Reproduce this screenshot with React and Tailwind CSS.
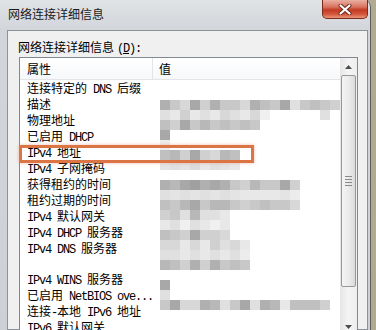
import React from 'react';

const rows = [
  '连接特定的 DNS 后缀',
  '描述',
  '物理地址',
  '已启用 DHCP',
  'IPv4 地址',
  'IPv4 子网掩码',
  '获得租约的时间',
  '租约过期的时间',
  'IPv4 默认网关',
  'IPv4 DHCP 服务器',
  'IPv4 DNS 服务器',
  '',
  'IPv4 WINS 服务器',
  '已启用 NetBIOS ove...',
  '连接-本地 IPv6 地址',
  'IPv6 默认网关',
];

// pixelated (blurred) values: [top y, start cell, grays]
const mosaic = [
  [100, 0, 'b0 c8 d8 a8 d0 b0 c8 c8 d8 b0 c0 c8 a8 e0 c8 c0 c8 d0'],
  [110, 0, 'e0 e8 d0 e8 e0 e8 d8 e0 e8 d8 f0'],
  [110, 16, 'e0'],
  [120, 0, 'c0 d0 a8 c8 b8 c8 c0 c8 c0 c8'],
  [130, 0, 'a8'],
  [140, 0, 'ec'],
  [150, 0, 'c0 b8 d0 a8 d0 d8 b8 c0'],
  [160, 0, 'e4 e0 e4 dc e8 e0 e4 e8'],
  [180, 0, 'b0 b8 a8 a0 b0 a8 b0 c8 d0 b8 c8 c8 a8 d0'],
  [190, 0, 'e0 e4 e0 e4 e0 e4 e0 e4 e8 e8 e8 e8 e4 ec'],
  [200, 0, 'c0 c8 b8 a8 c8 b8 b8 c8 d0 c8 c0 c8 c8 d8'],
  [210, 0, 'd0 c8 e0 b8 e0 e0 e8'],
  [220, 0, 'e8 e0 f0 e0 e8 f0 e8'],
  [230, 0, 'c0 c8 d0 a8 d0 d0 d8'],
  [240, 0, 'd8 d8 e8 d8 e8 d0 e0 d8 e8'],
  [250, 0, 'e0 e0 e8 e0 e8 e0 e8 e0 ec'],
  [260, 0, 'b8 c0 d0 b0 d0 b0 c8 c0 c8'],
  [280, 0, 'a8'],
  [290, 0, 'e0'],
  [300, 0, 'c8 a8 d8 d8 b0 b8 e0 c8 a8 e0 b0 b8 e8 c0 c0 c0 d0'],
];

function Label({ text }) {
  const parts = text.split(/([\x20-\x7e]+)/).filter(Boolean);
  return parts.map((p, i) =>
    /[\x20-\x7e]/.test(p[0]) ? (
      <span key={i} className="whitespace-pre font-['Liberation_Mono',monospace] tracking-[-1.2px]">
        {p}
      </span>
    ) : (
      <span key={i}>{p}</span>
    )
  );
}

function Mosaic() {
  return (
    <svg className="absolute left-[140px] top-[42px]" width="180" height="220">
      {mosaic.map(([y, start, grays]) =>
        grays.split(' ').map((g, i) => (
          <rect key={y + '-' + start + '-' + i} x={(start + i) * 10} y={y - 100} width="10" height="10" fill={'#' + g + g + g} />
        ))
      )}
    </svg>
  );
}

function Arrow({ up }) {
  return (
    <svg width="7" height="4">
      <polygon points={up ? '3.5,0 7,4 0,4' : '0,0 7,0 3.5,4'} fill="#4d4d4d" />
    </svg>
  );
}

export default function App() {
  return (
    <div className="w-[376px] h-[330px] overflow-hidden bg-[#b0aa92] flex font-['Noto_Sans_CJK_SC',sans-serif] text-[12px] text-black relative">
      <div className="w-[371px] h-full rounded-tr-[7px] border-r border-[#5e5e5e] bg-[linear-gradient(to_bottom,#e1e3e6,#d2d5d9_30px,#cdd0d4)] flex flex-col">
        {/* title bar */}
        <div className="h-[30px] flex justify-between">
          <div className="pl-[8px] pt-[6px] leading-[16px] text-[#1a1a1a]">网络连接详细信息</div>
          <div className="w-[46px] h-[19px] mr-[2px] rounded-b-[5px] border border-t-0 border-[#7a2c20] bg-[linear-gradient(to_bottom,#eab0a3_0%,#d8705c_40%,#c23a22_55%,#d45a40_80%,#e99578_100%)] flex items-center justify-center">
            <svg width="14" height="11">
              <path d="M2.5 1.5 L11.5 9.5 M11.5 1.5 L2.5 9.5" stroke="#6a2418" strokeWidth="4" strokeLinecap="round" />
              <path d="M2.5 1.5 L11.5 9.5 M11.5 1.5 L2.5 9.5" stroke="#ffffff" strokeWidth="2.2" strokeLinecap="round" />
            </svg>
          </div>
        </div>

        {/* client */}
        <div className="flex-1 flex pl-[7px] pr-[2px] min-h-0">
          <div className="flex-1 border border-[#8e9297] bg-[#f0f0f0] pt-[9px] pl-[11px]">
            <div className="h-[14px] leading-[14px] -ml-px">
              网络连接详细信息
              <span className="ml-[3px] whitespace-pre font-['Liberation_Mono',monospace] tracking-[-1.2px]">
                (<span className="underline">D</span>):
              </span>
            </div>

            <div className="mt-[3px] w-[339px] h-[279px] border border-[#828790] bg-white flex">
              <div className="flex-1 relative flex flex-col">
                <div className="h-[23px] border-b border-[#e3e5e8] bg-[linear-gradient(to_bottom,#ffffff,#f7f8fa)] flex items-center">
                  <div className="w-[133px] h-full pl-[7px] pt-px flex items-center border-r border-[#e3e5e8]">属性</div>
                  <div className="pl-[6px] pt-px">值</div>
                </div>
                {rows.map((r, i) => (
                  <div key={i} className="h-[16px] leading-[16px] flex">
                    <div className="w-[133px] pl-[7px] whitespace-nowrap overflow-hidden">
                      <Label text={r} />
                    </div>
                  </div>
                ))}
                <Mosaic />
              </div>

              {/* scrollbar */}
              <div className="w-[17px] flex flex-col bg-[linear-gradient(to_right,#e6e6e6,#f4f4f4_50%,#ededed)]">
                <div className="h-[17px] flex items-center justify-center">
                  <Arrow up />
                </div>
                <div className="h-[212px] mx-[1px] rounded-[2px] border border-[#979797] bg-[linear-gradient(to_right,#f4f4f4,#ebebeb_50%,#dadada)] flex flex-col items-center justify-center gap-[2px]">
                  <div className="w-[7px] h-px bg-[#8a8a8a]" />
                  <div className="w-[7px] h-px bg-[#8a8a8a]" />
                  <div className="w-[7px] h-px bg-[#8a8a8a]" />
                  <div className="w-[7px] h-px bg-[#8a8a8a]" />
                </div>
                <div className="flex-1" />
                <div className="h-[17px] flex items-center justify-center">
                  <Arrow />
                </div>
              </div>
            </div>
          </div>
        </div>
      </div>

      {/* highlight drawn over the list */}
      <div className="absolute left-[19px] top-[145px] w-[235px] h-[18px] border-[3px] border-[#dc7546] shadow-[0_0_3px_rgba(230,140,110,0.6)]" />
    </div>
  );
}
